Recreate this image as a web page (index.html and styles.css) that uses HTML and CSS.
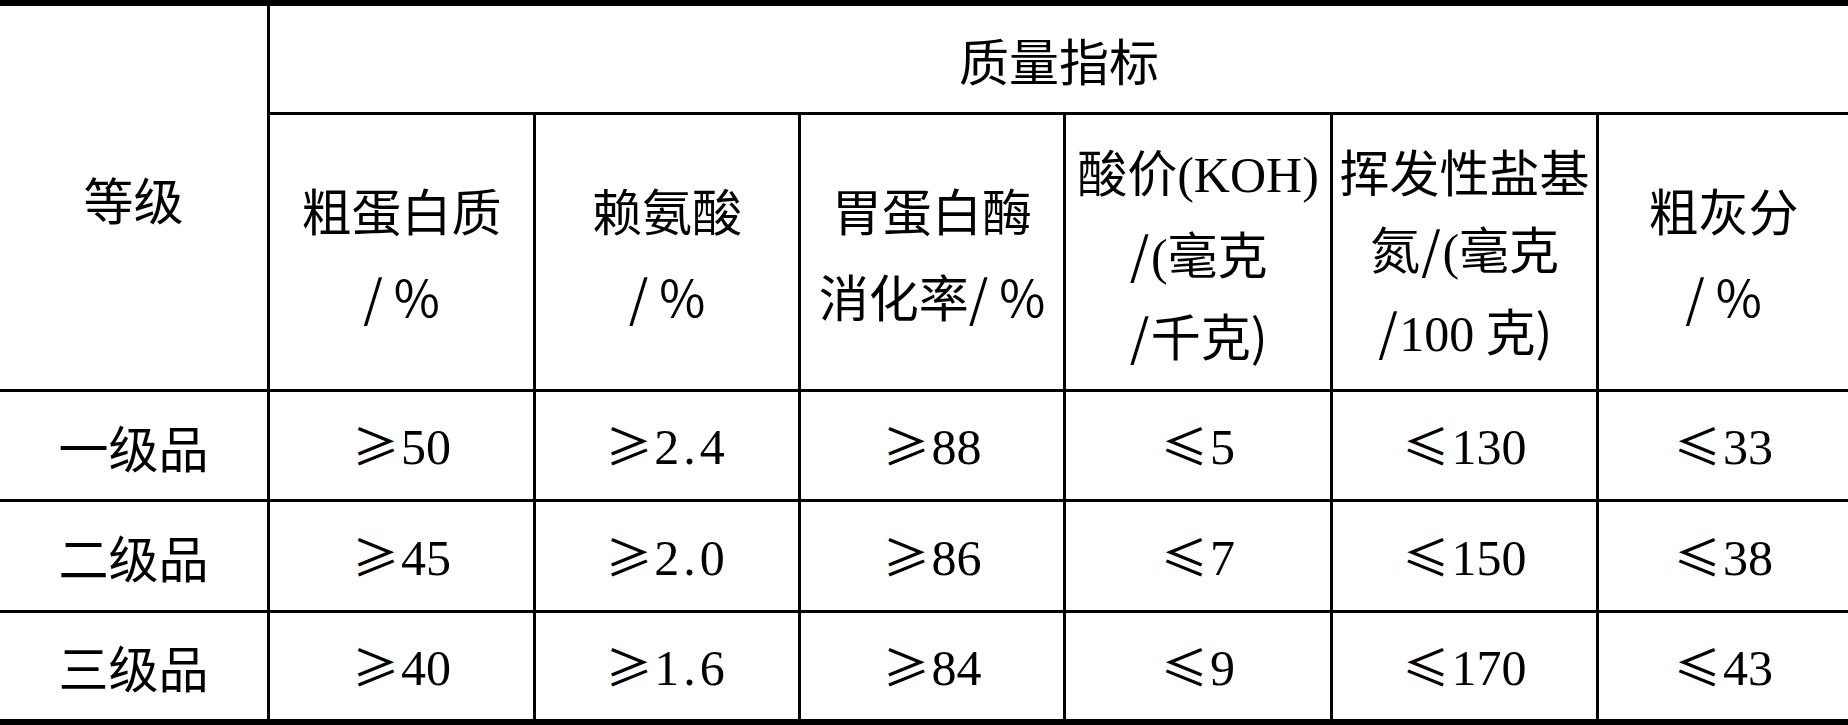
FILE: index.html
```html
<!DOCTYPE html>
<html lang="zh-CN">
<head>
<meta charset="utf-8">
<link rel="stylesheet" href="styles.css">
<title>质量指标</title>
</head>
<body>
<div class="grid">
  <div class="cell grade-head"><div class="txt">等级</div></div>
  <div class="cell quality-head"><div class="txt">质量指标</div></div>

  <div class="cell head"><div class="txt">粗蛋白质<br><span class="pct">/%</span></div></div>
  <div class="cell head"><div class="txt">赖氨酸<br><span class="pct">/%</span></div></div>
  <div class="cell head"><div class="txt">胃蛋白酶<br>消化率<span class="pct">/%</span></div></div>
  <div class="cell head three"><div class="txt">酸价<span class="lat">(KOH)</span><br><span class="sl">/</span><span class="lat">(</span>毫克<br><span class="sl">/</span>千克)</div></div>
  <div class="cell head three"><div class="txt">挥发性盐基<br>氮<span class="sl">/</span><span class="lat">(</span>毫克<br><span class="sl">/</span><span class="lat">100</span> 克)</div></div>
  <div class="cell head"><div class="txt">粗灰分<br><span class="pct">/%</span></div></div>

  <div class="cell label"><div class="txt">一级品</div></div>
  <div class="cell num"><div class="txt"><span class="op">≥</span>50</div></div>
  <div class="cell num"><div class="txt"><span class="op">≥</span><span class="mono">2.4</span></div></div>
  <div class="cell num"><div class="txt"><span class="op">≥</span>88</div></div>
  <div class="cell num"><div class="txt"><span class="op">≤</span>5</div></div>
  <div class="cell num"><div class="txt"><span class="op">≤</span>130</div></div>
  <div class="cell num"><div class="txt"><span class="op">≤</span>33</div></div>

  <div class="cell label"><div class="txt">二级品</div></div>
  <div class="cell num"><div class="txt"><span class="op">≥</span>45</div></div>
  <div class="cell num"><div class="txt"><span class="op">≥</span><span class="mono">2.0</span></div></div>
  <div class="cell num"><div class="txt"><span class="op">≥</span>86</div></div>
  <div class="cell num"><div class="txt"><span class="op">≤</span>7</div></div>
  <div class="cell num"><div class="txt"><span class="op">≤</span>150</div></div>
  <div class="cell num"><div class="txt"><span class="op">≤</span>38</div></div>

  <div class="cell label"><div class="txt">三级品</div></div>
  <div class="cell num"><div class="txt"><span class="op">≥</span>40</div></div>
  <div class="cell num"><div class="txt"><span class="op">≥</span><span class="mono">1.6</span></div></div>
  <div class="cell num"><div class="txt"><span class="op">≥</span>84</div></div>
  <div class="cell num"><div class="txt"><span class="op">≤</span>9</div></div>
  <div class="cell num"><div class="txt"><span class="op">≤</span>170</div></div>
  <div class="cell num"><div class="txt"><span class="op">≤</span>43</div></div>
</div>
</body>
</html>
```
FILE: styles.css
```css
html, body {
  margin: 0;
  padding: 0;
  background: #ffffff;
}

.grid {
  width: 1848px;
  height: 725px;
  box-sizing: border-box;
  display: grid;
  grid-template-columns: 267px 263px 262px 262px 264px 263px 249px;
  grid-template-rows: 106px 274px 107px 108px 106px;
  column-gap: 3px;
  row-gap: 3px;
  padding: 6px 0;
  background: #000000;
  font-family: "Noto Sans CJK SC", "Liberation Serif", serif;
  font-size: 50px;
  color: #000000;
}

.cell {
  background: #ffffff;
  display: flex;
  align-items: center;
  justify-content: center;
  text-align: center;
  line-height: 82px;
  white-space: nowrap;
}

.txt {
  display: block;
}

.grade-head {
  grid-row: 1 / span 2;
  grid-column: 1;
}

.quality-head {
  grid-column: 2 / span 6;
}

.head {
  line-height: 86px;
}

.head.three {
  line-height: 77px;
}

.pct {
  letter-spacing: 0.22em;
  margin-right: -0.22em;
}

.sl {
  display: inline-block;
  width: 0.45em;
}

.lat {
  font-family: "Liberation Serif", serif;
  font-size: 50px;
}

.num {
  font-family: "Liberation Serif", serif;
  font-size: 50px;
}

.op {
  font-family: "Noto Sans CJK SC", "DejaVu Sans", sans-serif;
  font-size: 47px;
  margin-right: 2px;
}

.mono {
  font-family: "Liberation Serif", serif;
  letter-spacing: 0.08em;
}
```
